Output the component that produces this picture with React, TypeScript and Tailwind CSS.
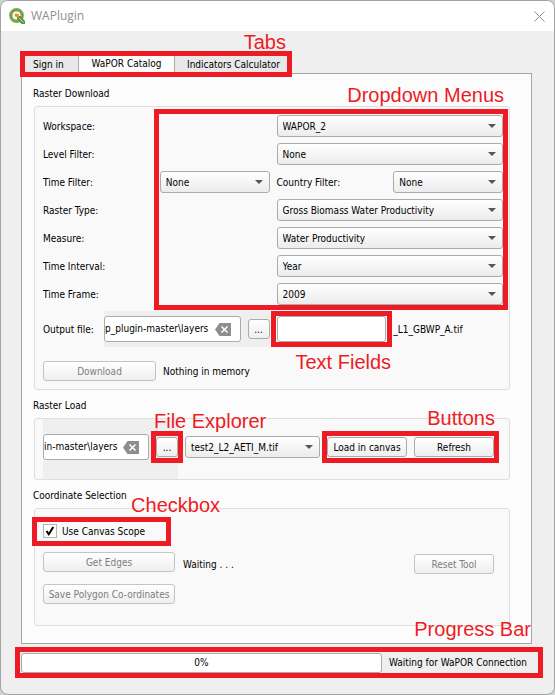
import { useState } from "react";
import type { ReactNode } from "react";

const UI = "font-['DejaVu_Sans_Condensed','DejaVu_Sans',sans-serif]";

function Frame({ className }: { className: string }) {
  return <div aria-hidden="true" className={`pointer-events-none absolute z-10 border-5 border-[#ed1c24] ${className}`} />;
}

function Note({ className, children }: { className: string; children: ReactNode }) {
  return (
    <span
      className={`pointer-events-none absolute z-10 font-['Liberation_Sans',Arial,sans-serif] text-[20px] leading-6 whitespace-nowrap text-[#ed1c24] ${className}`}
    >
      {children}
    </span>
  );
}

function Combo({ id, label, value, className = "" }: { id: string; label?: string; value: string; className?: string }) {
  return (
    <div className={`relative ${className}`}>
      <select
        id={id}
        aria-label={label}
        className="block h-[22px] w-full appearance-none rounded-[3px] border border-[#ababab] bg-linear-to-b from-white to-[#ececec] pt-0.5 pr-5 pl-[5px] text-black outline-none"
      >
        <option>{value}</option>
      </select>
      <svg className="pointer-events-none absolute top-[9px] right-[7px] h-1 w-2" viewBox="0 0 8 4" aria-hidden="true">
        <path d="M0 0h8L4 4z" fill="#555" />
      </svg>
    </div>
  );
}

function Button({ children, className = "", disabled = false }: { children: ReactNode; className?: string; disabled?: boolean }) {
  return (
    <button
      type="button"
      disabled={disabled}
      className={`h-5 shrink-0 rounded-[3px] border bg-linear-to-b from-white to-[#efefef] pt-0.5 text-center leading-4 whitespace-nowrap ${
        disabled ? "border-[#c3c3c3] text-[#7d7d7d]" : "border-[#ababab] text-black"
      } ${className}`}
    >
      {children}
    </button>
  );
}

function PathInput({ id, label, initial }: { id: string; label?: string; initial: string }) {
  const [value, setValue] = useState(initial);
  return (
    <div className="flex h-[26px] min-w-0 flex-1 items-center rounded-[3px] border border-[#ababab] bg-white pr-[9px]">
      <input
        id={id}
        aria-label={label}
        value={value}
        onChange={(e) => setValue(e.target.value)}
        className="h-6 w-full min-w-0 flex-1 bg-transparent leading-6 outline-none"
      />
      <button type="button" aria-label="Clear" onClick={() => setValue("")} className="shrink-0">
        <svg className="h-[13px] w-4" viewBox="0 0 16 13" aria-hidden="true">
          <path d="M4.500 0H16v13H4.500L0 6.500z" fill="#8e8e8e" />
          <path d="M6.500 3.500l6 6M12.500 3.500l-6 6" stroke="#fff" strokeWidth="1.500" />
        </svg>
      </button>
    </div>
  );
}

function Group({ title, className, note, children }: { title: string; className: string; note?: ReactNode; children: ReactNode }) {
  return (
    <section className="relative">
      <h2 className="-ml-px mb-1 pt-px leading-4">{title}</h2>
      <div className={`rounded-[3px] border border-[#dedede] bg-[#f9f9f9] pr-1.5 pl-2 ${className}`}>{children}</div>
      {note}
    </section>
  );
}

const measures = [
  { id: "type", label: "Raster Type:", value: "Gross Biomass Water Productivity" },
  { id: "measure", label: "Measure:", value: "Water Productivity" },
  { id: "interval", label: "Time Interval:", value: "Year" },
  { id: "frame", label: "Time Frame:", value: "2009" },
];

function WideRow({ id, label, value }: { id: string; label: string; value: string }) {
  return (
    <>
      <label htmlFor={id} className="col-span-2 pt-0.5">
        {label}
      </label>
      <Combo id={id} value={value} className="col-span-2" />
    </>
  );
}

export default function App() {
  const [scope, setScope] = useState(true);
  return (
    <div className="min-h-screen bg-[#cfd3cf]">
      <main className={`flex min-h-screen flex-col overflow-hidden rounded-lg border border-[#a3a3a3] bg-[#efefef] text-[10px] leading-4 text-black ${UI}`}>
        <header className="flex h-[30px] shrink-0 items-center bg-white pr-[9px] pl-2">
          <svg className="h-4 w-4" viewBox="0 0 16 16" aria-hidden="true">
            <circle cx="7.500" cy="7.500" r="5.700" fill="none" stroke="#7aa64a" strokeWidth="3.400" />
            <path d="M8 8h3.500l4.500 5v3h-3.500L8 11z" fill="#5f9345" />
            <path d="M9.500 9.500l5 5" stroke="#c5dc8e" strokeWidth="1" />
            <path d="M6 5.500l4 .5-.5 4-4-2z" fill="#ef8a3c" />
          </svg>
          <h1 className="ml-1.5 flex-1 font-['Open_Sans','Noto_Sans',sans-serif] text-[12px] leading-5 text-[#8f8f8f]">WAPlugin</h1>
          <button type="button" aria-label="Close">
            <svg className="h-[11px] w-[11px]" viewBox="0 0 11 11" aria-hidden="true">
              <path d="M.5.5l10 10M10.500.5l-10 10" stroke="#8d8d8d" strokeWidth="1" />
            </svg>
          </button>
        </header>

        <div className="flex-1 pt-6 pr-[22px] pb-5 pl-5">
          <div className="relative flex h-[18px] w-[267px]" role="tablist">
            <button type="button" role="tab" aria-selected="false" className="w-[58px] border-r border-[#ababab] bg-[#e8e8e8] pt-0.5 pl-3 text-left whitespace-nowrap">
              Sign in
            </button>
            <button type="button" role="tab" aria-selected="true" className="w-24 border-r border-[#ababab] bg-[#fcfcfc] text-center whitespace-nowrap">
              WaPOR Catalog
            </button>
            <button type="button" role="tab" aria-selected="false" className="flex-1 bg-[#e8e8e8] pt-0.5 pl-3 text-left whitespace-nowrap">
              Indicators Calculator
            </button>
            <Frame className="-top-1 -right-1 -bottom-1 -left-px" />
            <Note className="-top-[25px] right-0.5">Tabs</Note>
          </div>

          <div className="relative flex flex-col gap-[7px] border border-[#a5a5a5] bg-[#fcfcfc] pt-[11px] pr-[21px] pb-[17px] pl-3">
            <Group title="Raster Download" className="pt-2 pb-2" note={<Note className="-top-0.5 right-1.5">Dropdown Menus</Note>}>
              <div className="relative grid grid-cols-4 items-center gap-x-[7px] gap-y-1.5">
                <WideRow id="workspace" label="Workspace:" value="WAPOR_2" />
                <WideRow id="level" label="Level Filter:" value="None" />
                <label htmlFor="time" className="pt-0.5">
                  Time Filter:
                </label>
                <Combo id="time" value="None" />
                <label htmlFor="country" className="pt-0.5">
                  Country Filter:
                </label>
                <Combo id="country" value="None" />
                {measures.map((m) => (
                  <WideRow key={m.id} {...m} />
                ))}
                <Frame className="-top-1.5 -right-[5px] -bottom-[5px] left-1/4 -ml-1" />
              </div>

              <div className="mt-1.5 grid grid-cols-4 items-center gap-x-[7px]">
                <div className="col-span-2 flex items-center">
                  <label htmlFor="output" className="w-[61px] shrink-0 pt-0.5">
                    Output file:
                  </label>
                  <div className="flex h-9 min-w-0 flex-1 items-center gap-[7px] bg-[#efefef]">
                    <PathInput id="output" initial="p_plugin-master\layers" />
                    <Button className="w-[22px]">...</Button>
                  </div>
                </div>
                <div className="relative">
                  <input id="prefix" aria-label="File name prefix" className="block h-[26px] w-full rounded-[3px] border border-[#ababab] bg-white px-1 outline-none" />
                  <Frame className="-inset-x-1.5 -inset-y-[5px]" />
                  <Note className="top-[34px] left-[19px]">Text Fields</Note>
                </div>
                <span className="pt-0.5">_L1_GBWP_A.tif</span>
              </div>

              <div className="mt-3.5 flex items-center gap-[7px]">
                <Button disabled className="w-[113px]">
                  Download
                </Button>
                <span className="pt-0.5">Nothing in memory</span>
              </div>
            </Group>

            <Group title="Raster Load" className="">
              <div className="flex h-[60px] gap-[7px] pr-[9px]">
                <div className="flex min-w-0 flex-1 items-center gap-[7px] bg-[#efefef] pb-1">
                  <PathInput id="load-path" label="Raster folder" initial="in-master\layers" />
                  <div className="relative flex">
                    <Button className="w-[22px]">...</Button>
                    <Frame className="-inset-x-[5px] -inset-y-1.5" />
                    <Note className="-top-7 -left-0.5">File Explorer</Note>
                  </div>
                </div>
                <div className="flex min-w-0 flex-1 items-center pb-1">
                  <Combo id="raster" label="Raster file" value="test2_L2_AETI_M.tif" className="w-full" />
                </div>
                <div className="flex items-center pb-1">
                  <div className="relative flex gap-[7px]">
                    <Button className="w-20">Load in canvas</Button>
                    <Button className="w-20">Refresh</Button>
                    <Frame className="-inset-x-[5px] -inset-y-1.5" />
                    <Note className="-top-[31px] -right-px">Buttons</Note>
                  </div>
                </div>
              </div>
            </Group>

            <Group title="Coordinate Selection" className="pt-[15px] pb-[21px]">
              <div className="relative flex h-3.5 w-[123px] items-center">
                <span className="relative flex shrink-0">
                  <input
                    id="scope"
                    type="checkbox"
                    checked={scope}
                    onChange={(e) => setScope(e.target.checked)}
                    className="h-3.5 w-3.5 appearance-none border border-[#b5b5b5] bg-white"
                  />
                  {scope && (
                    <svg className="pointer-events-none absolute inset-0 h-3.5 w-3.5" viewBox="0 0 14 14" aria-hidden="true">
                      <path d="M3.500 7l2.300 3.300L10.300 3" fill="none" stroke="#000" strokeWidth="2" />
                    </svg>
                  )}
                </span>
                <label htmlFor="scope" className="pt-0.5 pl-[5px] whitespace-nowrap">
                  Use Canvas Scope
                </label>
                <Frame className="-top-[7px] -right-[5px] -bottom-2 -left-[11px]" />
                <Note className="-top-[31px] -right-[54px]">Checkbox</Note>
              </div>
              <div className="mt-3.5 flex h-[22px] gap-2 pr-[9px]">
                <Button disabled className="w-[132px]">
                  Get Edges
                </Button>
                <span className="flex-1 self-end pt-0.5 leading-[18px]">Waiting . . .</span>
                <Button disabled className="w-20 self-end">
                  Reset Tool
                </Button>
              </div>
              <Button disabled className="mt-2.5 block w-[132px]">
                Save Polygon Co-ordinates
              </Button>
            </Group>
            <Note className="right-0 bottom-0.5">Progress Bar</Note>
          </div>

          <div className="relative mt-[9px] flex items-center gap-[7px]">
            <div
              role="progressbar"
              aria-label="Connection progress"
              aria-valuenow={0}
              aria-valuemin={0}
              aria-valuemax={100}
              className="h-5 flex-1 rounded-[3px] border border-[#ababab] bg-white text-center leading-[18px]"
            >
              0%
            </div>
            <span className="w-[143px] whitespace-nowrap">Waiting for WaPOR Connection</span>
            <Frame className="-top-1.5 -right-[11px] -bottom-[5px] -left-1.5" />
          </div>
        </div>
      </main>
    </div>
  );
}
